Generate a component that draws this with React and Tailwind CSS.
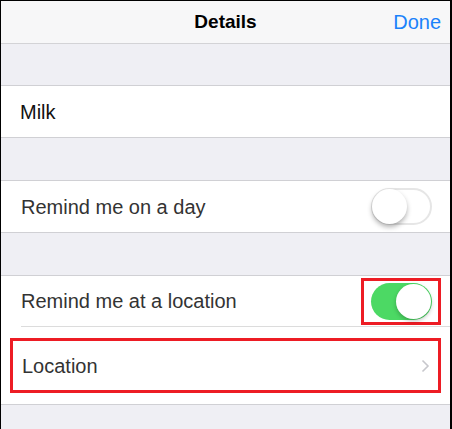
const Toggle = ({ on }) =>
  on ? (
    <div className="w-[61px] h-[37px] rounded-full bg-[#4cd964] flex items-center justify-end p-[1px]">
      <div className="w-[35px] h-[35px] rounded-full bg-white shadow-[0_2px_4px_rgba(0,0,0,0.25)]" />
    </div>
  ) : (
    <div className="w-[61px] h-[37px] rounded-full border-2 border-[#e6e6e6] bg-white flex items-center">
      <div className="w-[35px] h-[35px] -ml-[1px] rounded-full bg-white shadow-[0_3px_5px_rgba(0,0,0,0.3)]" />
    </div>
  );

const Gap = ({ h }) => <div className={`bg-[#efeff4] ${h}`} />;

export default function App() {
  return (
    <div
      className="w-[452px] h-[429px] overflow-hidden bg-[#efeff4] border-l border-t border-r-2 border-black flex flex-col"
      style={{ fontFamily: '"Liberation Sans", Arial, sans-serif' }}
    >
      <div className="h-[43px] shrink-0 bg-[#f7f7f8] border-b border-[#d3d3d6] flex items-center relative">
        <div className="flex-1 text-center text-[19px] font-bold text-black">Details</div>
        <div className="absolute right-[9px] text-[20px] text-[#1a82fb]">Done</div>
      </div>

      <div className="h-[41px] shrink-0 bg-[#efeff4]" />

      <div className="h-[53px] shrink-0 bg-white border-y border-[#d0d0d4] flex items-center pl-[19px] text-[20px] text-[#111]">
        Milk
      </div>

      <Gap h="h-[42px] shrink-0" />

      <div className="h-[53px] shrink-0 bg-white border-y border-[#d0d0d4] flex items-center justify-between pl-[20px] pr-[18px] text-[20px] text-[#333]">
        <span>Remind me on a day</span>
        <Toggle on={false} />
      </div>

      <Gap h="h-[42px] shrink-0" />

      <div className="shrink-0 bg-white border-y border-[#d0d0d4]">
        <div className="ml-[20px] h-[51px] border-b border-[#dcdcdc] flex items-center justify-between pr-[9px] text-[20px] text-[#333]">
          <span>Remind me at a location</span>
          <div className="border-[3px] border-[#ed1c24] pl-[7px] pr-[6px] h-[47px] flex items-center">
            <Toggle on />
          </div>
        </div>
        <div className="h-[77px] flex items-center pl-[9px] pr-[9px]">
          <div className="flex-1 h-[55px] border-[3px] border-[#ed1c24] flex items-center justify-between pl-[9px] pr-[8px] text-[20px] text-[#333]">
            <span>Location</span>
            <svg width="9" height="14" viewBox="0 0 9 14" fill="none">
              <path d="M1.5 1.5 L7 7 L1.5 12.5" stroke="#c7c7cc" strokeWidth="1.6" />
            </svg>
          </div>
        </div>
      </div>

      <div className="flex-1 bg-[#efeff4]" />
    </div>
  );
}
